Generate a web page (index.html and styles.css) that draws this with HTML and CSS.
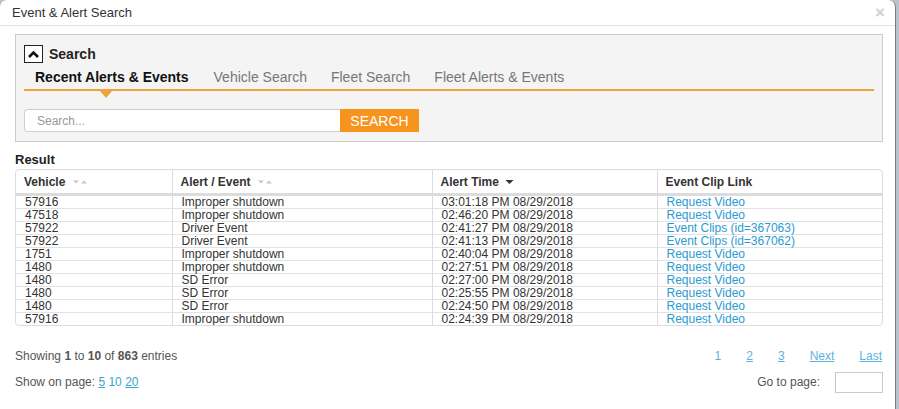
FILE: index.html
```html
<!DOCTYPE html>
<html>
<head>
<meta charset="utf-8">
<link rel="stylesheet" href="styles.css">
</head>
<body>
<div class="dialog">
  <div class="dlg-head">
    <span class="dlg-title">Event &amp; Alert Search</span>
    <span class="dlg-close">×</span>
  </div>
  <div class="dlg-body">
    <div class="panel">
      <div class="panel-title">
        <span class="collapse-btn"><svg width="11" height="8" viewBox="0 0 11 8"><path d="M1 7 L5.5 2.5 L10 7" fill="none" stroke="#111" stroke-width="2.6"/></svg></span>
        <span class="panel-name">Search</span>
      </div>
      <div class="tabs">
        <span class="tab active">Recent Alerts &amp; Events<i class="tab-arrow"></i></span>
        <span class="tab">Vehicle Search</span>
        <span class="tab">Fleet Search</span>
        <span class="tab">Fleet Alerts &amp; Events</span>
      </div>
      <div class="search-row">
        <input class="search-input" type="text" placeholder="Search...">
        <button class="search-btn">SEARCH</button>
      </div>
    </div>

    <div class="result-label">Result</div>
    <div class="table-wrap">
      <table class="grid">
        <colgroup><col class="c1"><col class="c2"><col class="c3"><col class="c4"></colgroup>
        <thead>
          <tr>
            <th>Vehicle <span class="sort"><svg width="16" height="6" viewBox="0 0 16 6"><path d="M1 1.5h6l-3 3z M9 4.5h6l-3-3z" fill="#c8c8c8"/></svg></span></th>
            <th>Alert / Event <span class="sort"><svg width="16" height="6" viewBox="0 0 16 6"><path d="M1 1.5h6l-3 3z M9 4.5h6l-3-3z" fill="#c8c8c8"/></svg></span></th>
            <th>Alert Time <span class="sort"><svg width="9" height="6" viewBox="0 0 9 6"><path d="M0.5 1h8l-4 4z" fill="#333"/></svg></span></th>
            <th>Event Clip Link</th>
          </tr>
        </thead>
        <tbody>
          <tr><td>57916</td><td>Improper shutdown</td><td>03:01:18 PM 08/29/2018</td><td><a>Request Video</a></td></tr>
          <tr><td>47518</td><td>Improper shutdown</td><td>02:46:20 PM 08/29/2018</td><td><a>Request Video</a></td></tr>
          <tr><td>57922</td><td>Driver Event</td><td>02:41:27 PM 08/29/2018</td><td><a>Event Clips (id=367063)</a></td></tr>
          <tr><td>57922</td><td>Driver Event</td><td>02:41:13 PM 08/29/2018</td><td><a>Event Clips (id=367062)</a></td></tr>
          <tr><td>1751</td><td>Improper shutdown</td><td>02:40:04 PM 08/29/2018</td><td><a>Request Video</a></td></tr>
          <tr><td>1480</td><td>Improper shutdown</td><td>02:27:51 PM 08/29/2018</td><td><a>Request Video</a></td></tr>
          <tr><td>1480</td><td>SD Error</td><td>02:27:00 PM 08/29/2018</td><td><a>Request Video</a></td></tr>
          <tr><td>1480</td><td>SD Error</td><td>02:25:55 PM 08/29/2018</td><td><a>Request Video</a></td></tr>
          <tr><td>1480</td><td>SD Error</td><td>02:24:50 PM 08/29/2018</td><td><a>Request Video</a></td></tr>
          <tr><td>57916</td><td>Improper shutdown</td><td>02:24:39 PM 08/29/2018</td><td><a>Request Video</a></td></tr>
        </tbody>
      </table>
    </div>

    <div class="foot-row first">
      <span>Showing <b>1</b> to <b>10</b> of <b>863</b> entries</span>
      <span class="pager">
        <a class="cur">1</a>
        <a class="u">2</a>
        <a class="u">3</a>
        <a class="u">Next</a>
        <a class="u">Last</a>
      </span>
    </div>
    <div class="foot-row second">
      <span>Show on page: <a class="u sz">5</a> <a class="sz">10</a> <a class="u sz">20</a></span>
      <span class="goto">Go to page: <input class="goto-input" type="text"></span>
    </div>
  </div>
</div>
</body>
</html>
```

FILE: styles.css
```css
html, body {
  margin: 0;
  padding: 0;
}
body {
  background: #b9c3cc;
  font-family: "Liberation Sans", Arial, sans-serif;
  color: #333;
  width: 899px;
  height: 409px;
  overflow: hidden;
}
.dialog {
  width: 895px;
  height: 420px;
  background: #fff;
  border-right: 1px solid #7b7b7b;
  border-top-right-radius: 7px;
  border-top-left-radius: 7px;
}
.dlg-head {
  height: 25px;
  border-bottom: 1px solid #e3e3e3;
  display: flex;
  align-items: center;
  justify-content: space-between;
  padding: 0 10px 0 12px;
}
.dlg-title {
  font-size: 13px;
  color: #333;
}
.dlg-close {
  font-size: 17px;
  font-weight: bold;
  color: #cfcfcf;
  line-height: 1;
}
.dlg-body {
  padding: 8px 12px 0 15px;
}
.panel {
  background: #f4f4f4;
  border: 1px solid #cdcdcd;
  padding: 9px 8px 9px 8px;
}
.panel-title {
  display: flex;
  align-items: center;
  height: 19px;
}
.collapse-btn {
  width: 17px;
  height: 16px;
  border: 1px solid #222;
  display: flex;
  align-items: center;
  justify-content: center;
  background: #fff;
}
.panel-name {
  font-size: 14px;
  font-weight: bold;
  color: #222;
  margin-left: 6px;
}
.tabs {
  display: flex;
  border-bottom: 2px solid #f0a33a;
  margin-top: 2px;
  height: 24px;
  align-items: center;
}
.tab {
  font-size: 14px;
  color: #777;
  padding: 0 12px;
  position: relative;
  line-height: 20px;
}
.tab:first-child {
  padding-left: 11px;
}
.tab.active {
  font-weight: bold;
  color: #111;
  padding-right: 13px;
}
.tab-arrow {
  position: absolute;
  left: 76px;
  top: 24px;
  width: 0;
  height: 0;
  border-left: 6px solid transparent;
  border-right: 6px solid transparent;
  border-top: 7px solid #f0a33a;
}
.search-row {
  display: flex;
  margin-top: 18px;
  height: 23px;
}
.search-input {
  width: 316px;
  height: 23px;
  box-sizing: border-box;
  border: 1px solid #cfcfcf;
  border-right: none;
  border-radius: 4px 0 0 4px;
  padding: 0 12px;
  font-family: "Liberation Sans", Arial, sans-serif;
  font-size: 12px;
  background: #fff;
  outline: none;
}
.search-input::placeholder {
  color: #999;
}
.search-btn {
  width: 79px;
  height: 23px;
  border: none;
  background: #f7941e;
  color: #fff;
  font-family: "Liberation Sans", Arial, sans-serif;
  font-size: 14px;
  padding: 0;
}
.result-label {
  font-size: 13px;
  font-weight: bold;
  color: #222;
  margin-top: 9px;
  height: 17px;
  line-height: 17px;
}
.table-wrap {
  margin-top: 1px;
  border: 1px solid #dcdcdc;
  border-radius: 4px;
  overflow: hidden;
}
.grid {
  width: 100%;
  border-collapse: collapse;
  table-layout: fixed;
}
.c1 { width: 156px; }
.c2 { width: 260px; }
.c3 { width: 225px; }
.c4 { width: auto; }
.grid th {
  text-align: left;
  font-size: 12px;
  font-weight: bold;
  color: #333;
  height: 23px;
  padding: 0 0 0 8px;
  border-left: 1px solid #dcdcdc;
  border-bottom: 3px solid #dcdcdc;
}
.grid th:first-child,
.grid td:first-child {
  border-left: none;
}
.sort {
  display: inline-block;
  margin-left: 3px;
  vertical-align: middle;
  line-height: 0;
}
.grid td {
  font-size: 12px;
  line-height: 12px;
  height: 12px;
  padding: 0 0 0 9px;
  border-left: 1px solid #dcdcdc;
  border-top: 1px solid #e2e2e2;
  color: #333;
  white-space: nowrap;
}
.grid tbody tr:first-child td {
  border-top: none;
}
.grid td a {
  color: #2b9ad3;
}
.foot-row {
  display: flex;
  justify-content: space-between;
  align-items: center;
  font-size: 12px;
  color: #555;
}
.foot-row.first {
  margin-top: 22px;
  height: 15px;
}
.foot-row.second {
  margin-top: 8px;
  height: 22px;
}
.pager {
  display: flex;
  gap: 0;
}
.pager a {
  color: #5bb4dc;
  margin-left: 25px;
}
.pager a.cur {
  margin-left: 0;
}
.pager a:last-child {
  margin-right: 1px;
}
.u {
  text-decoration: underline;
}
.sz {
  color: #3ba3cf;
}
.goto {
  display: flex;
  align-items: center;
}
.goto-input {
  width: 48px;
  height: 21px;
  box-sizing: border-box;
  border: 1px solid #c9c9c9;
  margin-left: 15px;
  margin-right: 0;
}
```
